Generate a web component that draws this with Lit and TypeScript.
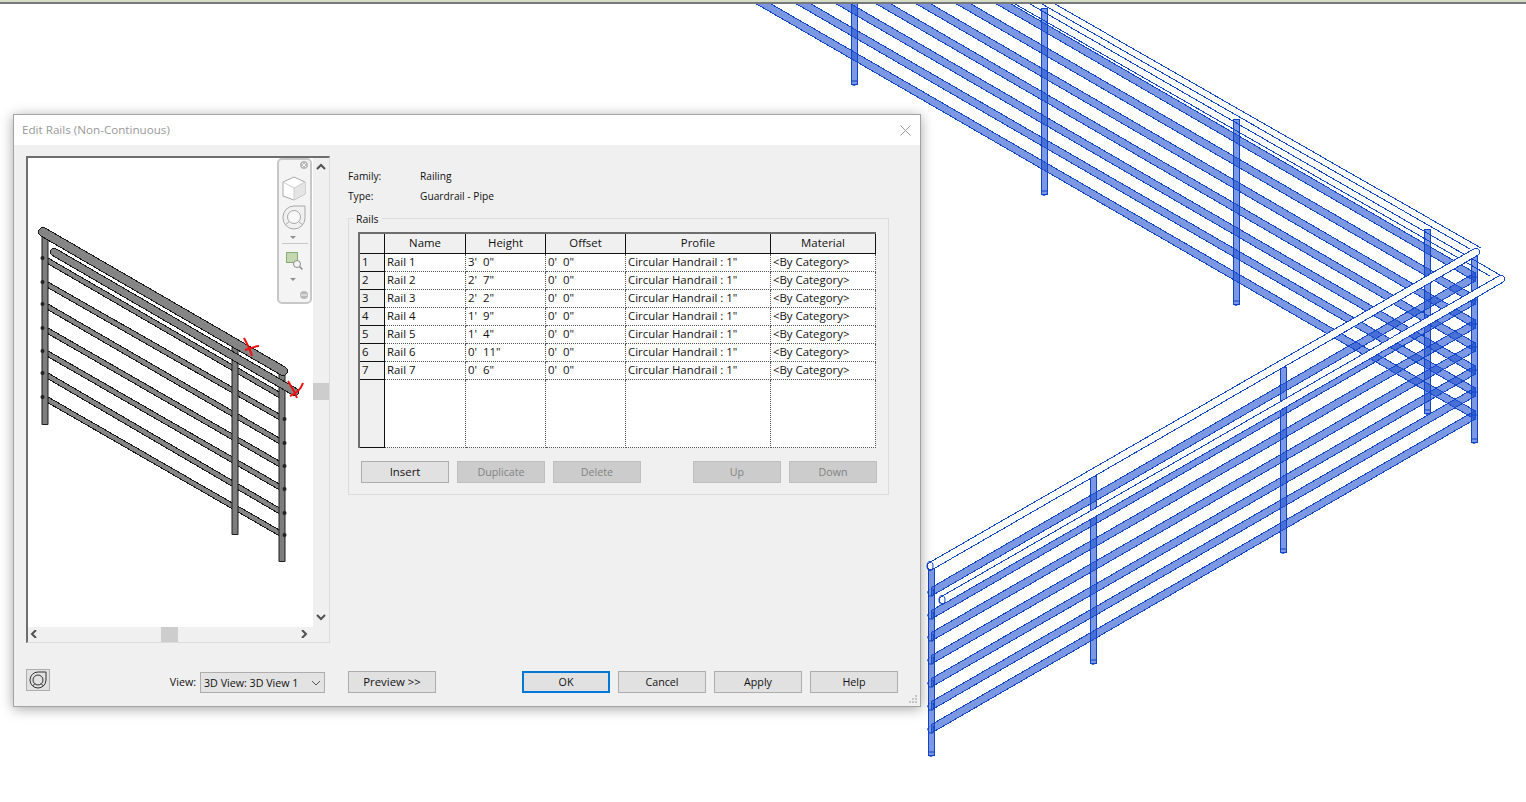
import { LitElement, html, svg, css } from 'lit';
import { customElement } from 'lit/decorators.js';

const RAIL_ENDS = [415, 392, 370, 347, 324, 300, 277];
const LOWER_STARTS = [592, 615, 637, 660, 683, 706, 729];

// one translucent rail of the background model
const railPoly = (x1: number, y1: number, x2: number, y2: number, h = 4.2) =>
  svg`<polygon class="rail" points="${x1},${y1 - h} ${x2},${y2 - h} ${x2},${y2 + h} ${x1},${y1 + h}"></polygon>`;

const post = (x: number, top: number, bottom: number) => svg`
  <rect class="rail" x="${x - 3}" y="${top}" width="6" height="${bottom - top}"></rect>
  <path class="edge" d="M${x - 3} ${bottom - 3}h6M${x - 3} ${bottom}q3 3 6 0"></path>`;

const knob = (x: number, y: number) => svg`
  <path class="edge" d="M${x - 4} ${y}h2M${x - 2} ${y - 3}q-2 4 0 7h4q2 -4 0 -7"></path>`;

const grayRail = (x1: number, y1: number, x2: number, y2: number) => svg`
  <line class="g-edge" x1="${x1}" y1="${y1}" x2="${x2}" y2="${y2}" stroke-width="6"></line>
  <line class="g-fill" x1="${x1}" y1="${y1}" x2="${x2}" y2="${y2}" stroke-width="4"></line>`;

const grayTube = (x1: number, y1: number, x2: number, y2: number, w: number) => svg`
  <line class="g-edge round" x1="${x1}" y1="${y1}" x2="${x2}" y2="${y2}" stroke-width="${w}"></line>
  <line class="g-fill round" x1="${x1}" y1="${y1}" x2="${x2}" y2="${y2}" stroke-width="${w - 2}"></line>`;

const grayPost = (x: number, top: number, bottom: number) => svg`
  <rect x="${x - 3.5}" y="${top}" width="7" height="${bottom - top}" rx="1" fill="#1c1c1c"></rect>
  <rect x="${x - 2.5}" y="${top}" width="5" height="${bottom - top - 1}" fill="#7d7d7d"></rect>`;

const ORBIT_ICON = svg`
  <path d="M3 11a8 8 0 0 1 8 -8h8v8a8 8 0 0 1 -16 0z" fill="none" stroke="currentColor"></path>
  <circle cx="11" cy="11" r="5" fill="none" stroke="currentColor"></circle>
  <path d="M5.500 17l2.500 -2.500M16.500 17l-2.500 -2.500" fill="none" stroke="currentColor"></path>`;

const RAILS = [
  ['Rail 1', `3'  0"`],
  ['Rail 2', `2'  7"`],
  ['Rail 3', `2'  2"`],
  ['Rail 4', `1'  9"`],
  ['Rail 5', `1'  4"`],
  ['Rail 6', `0'  11"`],
  ['Rail 7', `0'  6"`],
];

@customElement('app-root')
export class AppRoot extends LitElement {
  static styles = css`
    :host {
      display: block;
      position: relative;
      width: 1526px;
      height: 802px;
      overflow: hidden;
      background: #fff;
      font-family: "Open Sans", "Noto Sans", sans-serif;
      font-size: 11.4px;
      color: #111;
    }
    .topbar {
      position: absolute;
      inset: 0 0 auto 0;
      height: 2px;
      background: #d6dcc6;
      border-bottom: 2px solid #77797a;
    }
    .model {
      position: absolute;
      left: 0;
      top: 0;
    }
    .rail {
      fill: rgba(37, 83, 207, 0.6);
      stroke: #0f45c6;
      stroke-width: 1;
      shape-rendering: crispEdges;
    }
    .edge {
      fill: none;
      stroke: #0f45c6;
      stroke-width: 1;
    }
    .crisp {
      shape-rendering: crispEdges;
    }
    .tube-edge {
      stroke: #0f45c6;
      stroke-linecap: round;
      shape-rendering: crispEdges;
    }
    .tube-fill {
      stroke: #fff;
      stroke-linecap: round;
      shape-rendering: crispEdges;
    }
    .g-edge {
      stroke: #161616;
      shape-rendering: crispEdges;
    }
    .g-fill {
      stroke: #858585;
      shape-rendering: crispEdges;
    }
    .round {
      stroke-linecap: round;
    }

    .dialog {
      position: absolute;
      left: 13px;
      top: 114px;
      width: 906px;
      height: 591px;
      display: flex;
      flex-direction: column;
      background: #f0f0f0;
      border: 1px solid #a3a3a3;
      box-shadow: 0 2px 12px rgba(0, 0, 0, 0.35);
    }
    .titlebar {
      height: 30px;
      box-sizing: border-box;
      flex: none;
      display: flex;
      align-items: center;
      justify-content: space-between;
      padding: 0 9px 2px 8px;
      background: #fff;
      color: #999;
      font-size: 11.65px;
    }
    .close {
      display: block;
      margin-top: 2px;
    }
    .body {
      flex: 1;
      display: grid;
      grid-template-columns: 304px 550px;
      column-gap: 18px;
      padding: 11px 0 13px 12px;
      min-height: 0;
    }
    .left,
    .right {
      display: flex;
      flex-direction: column;
      min-height: 0;
    }

    .preview {
      position: relative;
      width: 304px;
      height: 487px;
      box-sizing: border-box;
      border: 2px solid #6e6e6e;
      border-right: 1px solid #dcdcdc;
      border-bottom: 1px solid #dcdcdc;
      background: #f0f0f0;
      display: grid;
      grid-template-columns: 285px 1fr;
      grid-template-rows: 469px 1fr;
    }
    .canvas {
      position: relative;
      background: #fff;
      overflow: hidden;
    }
    .canvas .drawing {
      position: absolute;
      left: -28px;
      top: -158px;
    }
    .vscroll {
      position: relative;
    }
    .hscroll {
      position: relative;
    }
    .chev {
      position: absolute;
      display: block;
    }
    .thumb {
      position: absolute;
      background: #cdcdcd;
    }
    .navbar {
      position: absolute;
      left: 249px;
      top: 0;
      width: 31px;
      height: 142px;
      border: 2px solid #c8c8c8;
      border-radius: 5px;
      background: #f4f4f4;
    }

    .preview-foot {
      display: flex;
      align-items: flex-start;
      margin-top: 26px;
      padding-right: 5px;
      font-size: 10.7px;
    }
    .orbit-btn {
      box-sizing: border-box;
      width: 24px;
      height: 22px;
      display: flex;
      align-items: center;
      justify-content: center;
      padding: 0;
      background: #e1e1e1;
      border: 1px solid #adadad;
      color: #333;
    }
    .view-label {
      margin: 6px 4px 0 auto;
    }
    .view-select {
      box-sizing: border-box;
      width: 125px;
      height: 21px;
      margin-top: 3px;
      padding: 0 3px 0 3px;
      display: flex;
      align-items: center;
      justify-content: space-between;
      background: #e3e3e3;
      border: 1px solid #adadad;
    }

    .info {
      display: grid;
      grid-template-columns: 72px 1fr;
      row-gap: 4px;
      line-height: 16px;
      margin: 12px 0 0;
      font-size: 10.2px;
    }
    .group {
      position: relative;
      box-sizing: border-box;
      width: 541px;
      height: 277px;
      margin-top: 14px;
      padding: 13px 0 0 9px;
      border: 1px solid #dcdcdc;
    }
    .legend {
      position: absolute;
      left: 5px;
      top: -8px;
      padding: 0 3px 0 2px;
      line-height: 16px;
      font-size: 10.5px;
      background: #f0f0f0;
    }
    table {
      box-sizing: border-box;
      width: 518px;
      table-layout: fixed;
      border-collapse: separate;
      border-spacing: 0;
      border-left: 2px solid #6e6e6e;
      border-top: 2px solid #6e6e6e;
    }
    th,
    td {
      box-sizing: border-box;
      height: 18px;
      padding: 0 0 2px 2px;
      font-weight: 400;
      font-size: inherit;
      line-height: 14px;
      text-align: left;
      white-space: pre;
      overflow: hidden;
      background: #fff;
      border-right: 1px dotted #555;
      border-bottom: 1px dotted #555;
    }
    thead th {
      height: 20px;
      padding: 0 0 2px;
      text-align: center;
      background: #f0f0f0;
      border-right: 1px solid #111;
      border-bottom: 1px solid #111;
    }
    tbody th {
      background: #f0f0f0;
      border-right: 1px solid #111;
      border-bottom: 1px solid #111;
    }
    .filler th,
    .filler td {
      height: 68px;
    }
    .group-actions {
      display: flex;
      gap: 8px;
      margin: 13px 0 0 3px;
    }
    .push {
      margin-left: 44px;
    }
    button.act {
      box-sizing: border-box;
      flex: none;
      width: 88px;
      height: 22px;
      padding: 0 0 1px;
      font-family: inherit;
      font-size: 10.7px;
      color: #111;
      background: #e1e1e1;
      border: 1px solid #adadad;
    }
    button.roomy {
      padding-bottom: 2px;
      font-size: 11.4px;
    }
    button.act:disabled {
      color: #838383;
      background: #ccc;
      border-color: #bfbfbf;
    }
    button.primary {
      border: 2px solid #0078d7;
    }
    .footer {
      display: flex;
      gap: 8px;
      margin-top: auto;
    }
    .footer .spacer {
      flex: none;
      width: 70px;
    }
    .grip {
      position: absolute;
      right: 2px;
      bottom: 2px;
      display: block;
    }
  `;

  private renderModel() {
    const upper = RAIL_ENDS.map((y, i) => railPoly(750 + 40 * i, -4, 1475, y));
    const lower = LOWER_STARTS.map((y, i) => railPoly(931, y, 1475, RAIL_ENDS[6 - i]));
    return html`<svg class="model" width="1526" height="802" viewBox="0 0 1526 802">
      ${upper}
      ${post(854, 0, 84)} ${post(1044, 8, 194)} ${post(1236, 119, 304)} ${post(1427, 229, 413)}
      ${lower}
      ${post(1093, 476, 663)} ${post(1283, 367, 552)} ${post(1474, 255, 442)} ${post(931, 568, 755)}
      ${LOWER_STARTS.map((y) => knob(931, y))}
      ${RAIL_ENDS.map((y) => svg`<path class="edge" d="M1472 ${y}h6"></path>`)}
      <path class="edge crisp" d="M1042 4L1470 249M1055 4L1481 248M1015 4L1490 276M1030 4L1500 275"></path>
      <line class="tube-edge" x1="931" y1="566" x2="1476" y2="252" stroke-width="8.500"></line>
      <line class="tube-fill" x1="931" y1="566" x2="1476" y2="252" stroke-width="6.500"></line>
      <line class="tube-edge" x1="943" y1="600" x2="1501" y2="279" stroke-width="8.500"></line>
      <line class="tube-fill" x1="943" y1="600" x2="1501" y2="279" stroke-width="6.500"></line>
      <ellipse class="edge" cx="930" cy="566" rx="3" ry="4.500"></ellipse>
      <ellipse class="edge" cx="942" cy="600" rx="3" ry="4.500"></ellipse>
    </svg>`;
  }

  private renderPreviewModel() {
    const left = [258, 282, 304, 328, 351, 373, 397];
    const right = [397, 419, 443, 466, 489, 513, 535];
    return html`<svg class="drawing" width="340" height="660" viewBox="0 0 340 660">
      ${left.map((y, i) => grayRail(43, y, 283, right[i]))}
      ${grayPost(45, 232, 425)} ${grayPost(235, 347, 535)} ${grayPost(282, 372, 562)}
      ${left.map((y) => svg`<circle cx="42.500" cy="${y}" r="2" fill="#222"></circle>`)}
      ${right.slice(1).map((y) => svg`<circle cx="284.500" cy="${y}" r="2" fill="#222"></circle>`)}
      ${grayTube(54, 252, 295, 392, 8.500)}
      ${grayTube(43, 232, 283, 371, 10)}
      <path d="M244 338c3 6 6 11 8 18M245 350c5 -1 10 -4 14 -4" fill="none" stroke="#f01010" stroke-width="2"></path>
      <path d="M288 381c3 5 6 9 9 17M303 383c-2 6 -6 10 -13 13" fill="none" stroke="#f01010" stroke-width="2"></path>
    </svg>`;
  }

  private renderNavBar() {
    return html`<div class="navbar">
      <svg width="31" height="142" viewBox="0 0 31 142">
        <circle cx="25" cy="5" r="4" fill="#b9b9b9"></circle>
        <path d="M23 3l4 4M27 3l-4 4" stroke="#f4f4f4"></path>
        <path d="M4 22l11 -5 11 5v12l-11 6 -11 -4z" fill="#fff" stroke="#a9a9a9"></path>
        <path d="M15 28l11 -6v12l-11 6z" fill="#e4e4e4"></path>
        <path d="M4 22l11 6 11 -6M15 28v12" fill="none" stroke="#cfcfcf"></path>
        <path d="M4 57a11 11 0 0 1 11 -11h11v12a11 11 0 0 1 -22 0z" fill="#f0f0f0" stroke="#a9a9a9"></path>
        <circle cx="15" cy="57" r="6.500" fill="#f8f8f8" stroke="#a9a9a9"></circle>
        <path d="M6 65l4.500 -3.500M24 65l-4.500 -3.500" stroke="#a9a9a9"></path>
        <path d="M11 76h6l-3 3z" fill="#8f8f8f"></path>
        <path d="M3 83.500h26" stroke="#c8c8c8"></path>
        <rect x="7.500" y="92.500" width="11" height="10" fill="#c3d8b1" stroke="#86ab72"></rect>
        <circle cx="18" cy="104" r="3.500" fill="#f4f4f4" stroke="#8c8c8c"></circle>
        <path d="M20.500 106.500l3 3" stroke="#8c8c8c" stroke-width="1.500"></path>
        <path d="M11 118h6l-3 3z" fill="#8f8f8f"></path>
        <circle cx="25" cy="135" r="4" fill="#b9b9b9"></circle>
        <path d="M22 135h6" stroke="#f4f4f4"></path>
      </svg>
    </div>`;
  }

  private chevron(points: string, left: number, top: number) {
    return html`<svg class="chev" style="left:${left}px;top:${top}px" width="10" height="8" viewBox="0 0 10 8">
      <polyline points="${points}" fill="none" stroke="#505050" stroke-width="2"></polyline>
    </svg>`;
  }

  render() {
    return html`
      ${this.renderModel()}
      <div class="topbar"></div>

      <div class="dialog">
        <div class="titlebar">
          <span>Edit Rails (Non-Continuous)</span>
          <svg class="close" width="11" height="11" viewBox="0 0 11 11">
            <path d="M0.500 0.500l10 10M10.500 0.500l-10 10" stroke="#9a9a9a"></path>
          </svg>
        </div>

        <div class="body">
          <div class="left">
            <div class="preview">
              <div class="canvas">${this.renderPreviewModel()}${this.renderNavBar()}</div>
              <div class="vscroll">
                ${this.chevron('1,6 5,2 9,6', 3, 5)}
                <div class="thumb" style="left:0;top:225px;width:16px;height:17px"></div>
                ${this.chevron('1,2 5,6 9,2', 3, 455)}
              </div>
              <div class="hscroll">
                ${this.chevron('6,0 2,4 6,8', 2, 3)}
                <div class="thumb" style="left:133px;top:0;width:17px;height:15px"></div>
                ${this.chevron('3,0 7,4 3,8', 271, 3)}
              </div>
              <div></div>
            </div>
            <div class="preview-foot">
              <button class="orbit-btn" aria-label="Orbit">
                <svg width="22" height="22" viewBox="0 0 22 22">${ORBIT_ICON}</svg>
              </button>
              <span class="view-label">View:</span>
              <div class="view-select">
                <span>3D View: 3D View 1</span>
                <svg width="10" height="6" viewBox="0 0 10 6">
                  <path d="M1 1l4 4 4 -4" fill="none" stroke="#555"></path>
                </svg>
              </div>
            </div>
          </div>

          <div class="right">
            <div class="info">
              <span>Family:</span><span>Railing</span>
              <span>Type:</span><span>Guardrail - Pipe</span>
            </div>
            <div class="group">
              <span class="legend">Rails</span>
              <table>
                <colgroup>
                  <col style="width:25px" /><col style="width:81px" /><col style="width:80px" />
                  <col style="width:80px" /><col style="width:145px" /><col style="width:105px" />
                </colgroup>
                <thead>
                  <tr><th></th><th>Name</th><th>Height</th><th>Offset</th><th>Profile</th><th>Material</th></tr>
                </thead>
                <tbody>
                  ${RAILS.map(([name, height], i) => html`<tr>
                    <th>${i + 1}</th>
                    <td>${name}</td>
                    <td>${height}</td>
                    <td>0'  0"</td>
                    <td>Circular Handrail : 1"</td>
                    <td>&lt;By Category&gt;</td>
                  </tr>`)}
                  <tr class="filler"><th></th><td></td><td></td><td></td><td></td><td></td></tr>
                </tbody>
              </table>
              <div class="group-actions">
                <button class="act roomy">Insert</button>
                <button class="act" disabled>Duplicate</button>
                <button class="act" disabled>Delete</button>
                <button class="act push" disabled>Up</button>
                <button class="act" disabled>Down</button>
              </div>
            </div>
            <div class="footer">
              <button class="act roomy">Preview &gt;&gt;</button>
              <span class="spacer"></span>
              <button class="act primary">OK</button>
              <button class="act">Cancel</button>
              <button class="act">Apply</button>
              <button class="act">Help</button>
            </div>
          </div>
        </div>

        <svg class="grip" width="9" height="9" viewBox="0 0 9 9" fill="#c4c4c4">
          <rect x="6" y="0" width="2" height="2"></rect>
          <rect x="3" y="3" width="2" height="2"></rect><rect x="6" y="3" width="2" height="2"></rect>
          <rect x="0" y="6" width="2" height="2"></rect><rect x="3" y="6" width="2" height="2"></rect>
          <rect x="6" y="6" width="2" height="2"></rect>
        </svg>
      </div>
    `;
  }
}
